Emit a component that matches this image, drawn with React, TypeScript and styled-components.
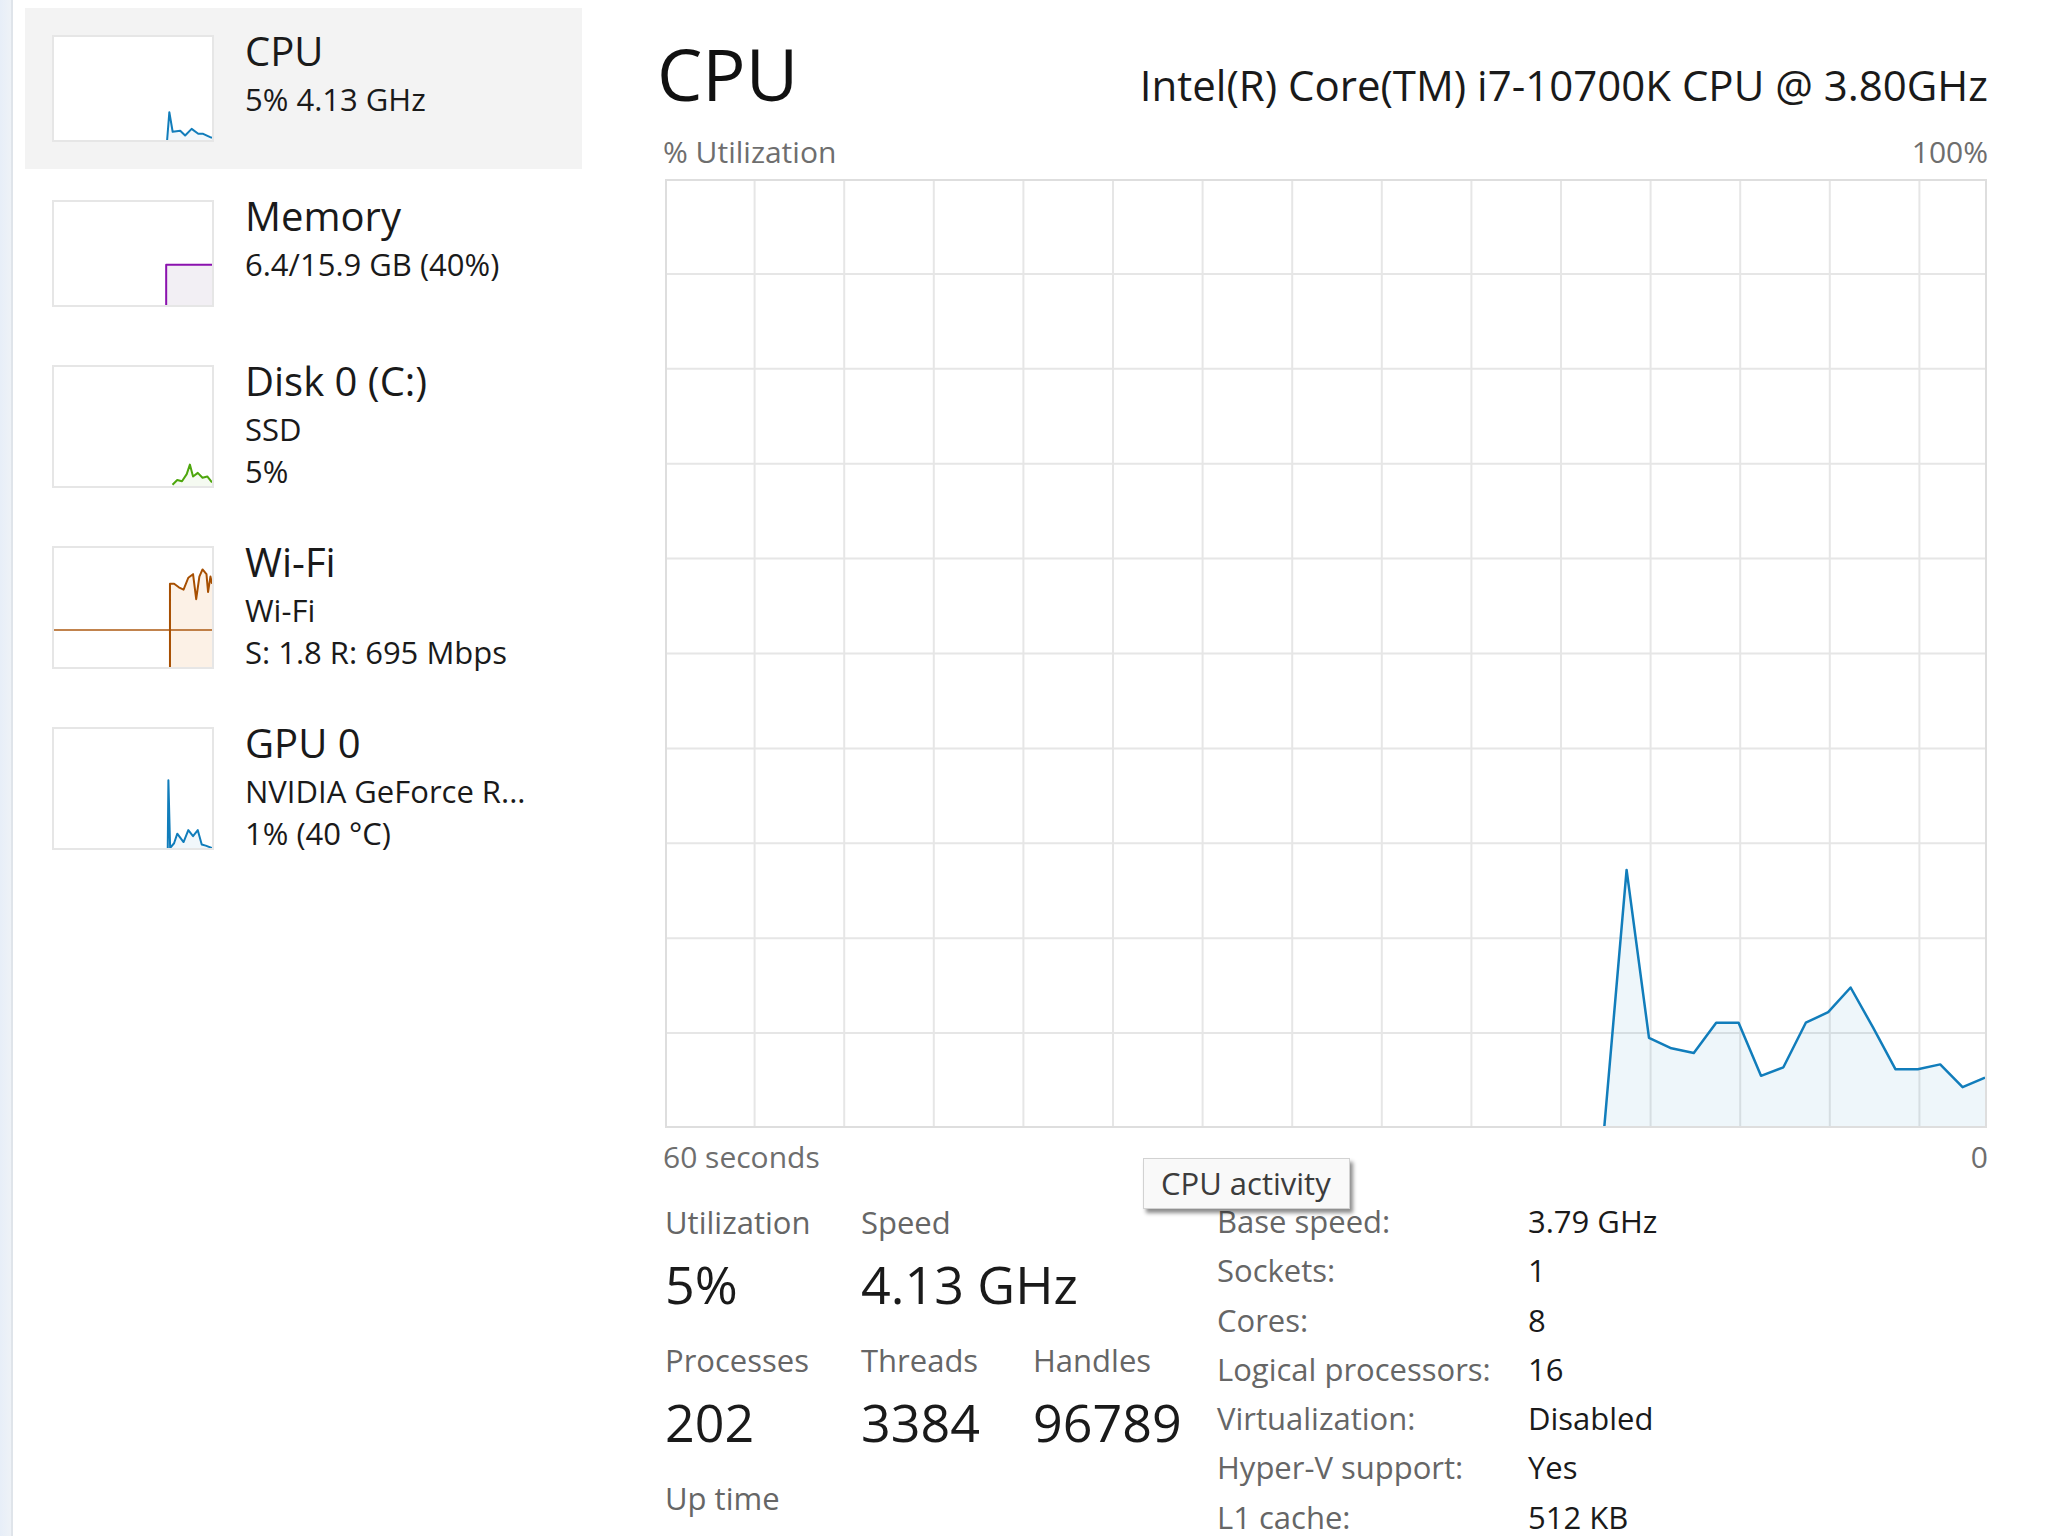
import styled, { createGlobalStyle } from 'styled-components';

type Point = [number, number];

interface Device {
  title: string;
  lines: string[];
  color: string;
  fill: string;
  points: Point[];
  guide?: number;
  selected?: boolean;
}

const GlobalStyle = createGlobalStyle`
  html, body {
    margin: 0;
    padding: 0;
    background: #ffffff;
    overflow: hidden;
  }
  body {
    font-family: 'Segoe UI', 'Open Sans', sans-serif;
    color: #1a1a1a;
  }
  * {
    box-sizing: border-box;
  }
`;

const Window = styled.div`
  display: flex;
  width: 2048px;
  height: 1536px;
  overflow: hidden;
  background: #ffffff;
`;

const EdgeStrip = styled.div`
  flex: 0 0 13px;
  background: linear-gradient(to right, #e7eef8, #eef2f7);
  border-right: 2px solid #dfe4ea;
`;

const Sidebar = styled.nav`
  flex: 0 0 582px;
  display: flex;
  flex-direction: column;
  gap: 4px;
  padding: 8px 13px 0 12px;
`;

const NavItem = styled.div<{ $selected?: boolean }>`
  display: flex;
  align-items: flex-start;
  gap: 31px;
  padding: 27px;
  background: ${({ $selected }) => ($selected ? '#f3f3f3' : 'transparent')};
`;

const Thumb = styled.div<{ $tall?: boolean }>`
  flex: 0 0 162px;
  height: ${({ $tall }) => ($tall ? '123px' : '107px')};
  border: 2px solid #e6e6e6;
  background: #ffffff;

  svg {
    display: block;
    width: 100%;
    height: 100%;
  }
`;

const NavText = styled.div`
  display: flex;
  flex-direction: column;
  margin: -11px 0 -10px;
`;

const NavTitle = styled.div`
  font-size: 40px;
  line-height: 54px;
  color: #1a1a1a;
  white-space: nowrap;
`;

const NavLine = styled.div`
  font-size: 31px;
  line-height: 42px;
  color: #1a1a1a;
  white-space: nowrap;
`;

const Main = styled.main`
  flex: 1;
  min-width: 0;
  display: flex;
  flex-direction: column;
  padding: 31px 60px 0 68px;
`;

const Header = styled.header`
  display: flex;
  align-items: baseline;
  justify-content: space-between;
`;

const Title = styled.h1`
  margin: 0 0 0 -6px;
  font-size: 72px;
  font-weight: 400;
  line-height: 84px;
  color: #111111;
`;

const Model = styled.div`
  font-size: 42px;
  line-height: 47px;
  color: #1a1a1a;
`;

const AxisRow = styled.div<{ $top: number }>`
  display: flex;
  justify-content: space-between;
  margin-top: ${({ $top }) => $top}px;
  font-size: 30px;
  line-height: 35px;
  color: #6e6e6e;
`;

const ChartBox = styled.div`
  margin: 10px 1px 0 2px;
  height: 949px;

  svg {
    display: block;
    width: 100%;
    height: 100%;
  }
`;

const StatsArea = styled.section`
  position: relative;
  display: flex;
  margin-top: 30px;
  padding-left: 2px;
`;

const LiveGrid = styled.div`
  display: grid;
  grid-template-columns: 196px 172px 184px;
  row-gap: 27px;
  align-content: start;
`;

const Stat = styled.div<{ $span?: number }>`
  display: flex;
  flex-direction: column;
  gap: 13px;
  grid-column: span ${({ $span }) => $span ?? 1};
`;

const StatLabel = styled.div`
  font-size: 31px;
  line-height: 36px;
  color: #666666;
  white-space: nowrap;
`;

const StatValue = styled.div`
  font-size: 52px;
  line-height: 62px;
  color: #1a1a1a;
  white-space: nowrap;
`;

const Details = styled.dl`
  margin: -7px 0 0;
  display: grid;
  grid-template-columns: 311px auto;
  align-content: start;
  font-size: 31px;
  line-height: 49.3px;
`;

const DetailLabel = styled.dt`
  color: #666666;
  white-space: nowrap;
`;

const DetailValue = styled.dd`
  margin: 0;
  color: #1a1a1a;
  white-space: nowrap;
`;

const Tooltip = styled.div`
  position: absolute;
  left: 480px;
  top: -46px;
  height: 51px;
  padding: 0 18px 0 17px;
  font-size: 31px;
  line-height: 48px;
  color: #3c3c3c;
  background: #f9f9f9;
  border: 1px solid #d2d2d2;
  box-shadow: 3px 4px 4px rgba(0, 0, 0, 0.45);
  white-space: nowrap;
`;

const devices: Device[] = [
  {
    title: 'CPU',
    lines: ['5% 4.13 GHz'],
    color: '#117dbb',
    fill: 'rgba(17, 125, 187, 0.06)',
    selected: true,
    points: [
      [71.6, 100], [73, 73], [75.1, 92], [79.9, 91], [83, 95.6], [87.1, 89.2],
      [91.3, 94], [94.4, 94], [98.5, 97], [100, 98],
    ],
  },
  {
    title: 'Memory',
    lines: ['6.4/15.9 GB (40%)'],
    color: '#8b12ae',
    fill: '#f2eff4',
    points: [[71, 100], [71, 61], [100, 61]],
  },
  {
    title: 'Disk 0 (C:)',
    lines: ['SSD', '5%'],
    color: '#4da60c',
    fill: 'rgba(77, 166, 12, 0.06)',
    points: [
      [75, 99], [78, 95], [81, 96], [84, 90], [86, 82], [88, 92], [91, 89],
      [94, 93], [97, 92], [100, 97],
    ],
  },
  {
    title: 'Wi-Fi',
    lines: ['Wi-Fi', 'S: 1.8 R: 695 Mbps'],
    color: '#a74f01',
    fill: '#fcf1e6',
    guide: 69,
    points: [
      [73.4, 100], [73.4, 30], [76, 30], [79, 33], [82, 35], [85, 25], [88, 22],
      [90, 43], [92, 24], [94, 18], [96.5, 22], [97.5, 37], [99, 24], [100, 30],
    ],
  },
  {
    title: 'GPU 0',
    lines: ['NVIDIA GeForce R...', '1% (40 °C)'],
    color: '#117dbb',
    fill: 'rgba(17, 125, 187, 0.06)',
    points: [
      [72, 100], [72.4, 43], [73.5, 100], [76, 96], [78, 88], [82, 95], [85, 85],
      [88, 90], [91, 85], [93.5, 97], [96, 98], [100, 100],
    ],
  },
];

const liveStats: { label: string; value?: string; span?: number }[] = [
  { label: 'Utilization', value: '5%' },
  { label: 'Speed', value: '4.13 GHz', span: 2 },
  { label: 'Processes', value: '202' },
  { label: 'Threads', value: '3384' },
  { label: 'Handles', value: '96789' },
  { label: 'Up time', span: 3 },
];

const details = [
  ['Base speed:', '3.79 GHz'],
  ['Sockets:', '1'],
  ['Cores:', '8'],
  ['Logical processors:', '16'],
  ['Virtualization:', 'Disabled'],
  ['Hyper-V support:', 'Yes'],
  ['L1 cache:', '512 KB'],
];

// last samples of the 60 second window, in percent
const cpuHistory = [
  0, 27.2, 9.5, 8.4, 7.9, 11.1, 11.1, 5.5, 6.4, 11.1, 12.2, 14.8, 10.6, 6.2, 6.2, 6.7, 4.3, 5.3,
];

const CHART_W = 1322;
const CHART_H = 949;
const GRID_X = 89.6;
const SAMPLE_STEP = 22.4;

const Sparkline = ({ color, fill, points, guide }: Device) => {
  const line = points.map(([x, y]) => `${x},${y}`).join(' ');
  const area = `${points[0][0]},100 ${line} 100,100`;
  return (
    <svg viewBox="0 0 100 100" preserveAspectRatio="none">
      <polygon points={area} fill={fill} />
      {guide !== undefined && (
        <line
          x1={0}
          y1={guide}
          x2={100}
          y2={guide}
          stroke={color}
          strokeOpacity={0.7}
          strokeWidth={2}
          vectorEffect="non-scaling-stroke"
        />
      )}
      <polyline
        points={line}
        fill="none"
        stroke={color}
        strokeWidth={2}
        strokeLinejoin="round"
        vectorEffect="non-scaling-stroke"
      />
    </svg>
  );
};

const UtilizationChart = () => {
  const last = cpuHistory.length - 1;
  const pts = cpuHistory.map((v, i) => {
    const x = CHART_W - 2 - (last - i) * SAMPLE_STEP;
    const y = CHART_H - (v / 100) * CHART_H;
    return `${x.toFixed(1)},${y.toFixed(1)}`;
  });
  const firstX = CHART_W - 2 - last * SAMPLE_STEP;
  const rows = Array.from({ length: 9 }, (_, i) => ((i + 1) * CHART_H) / 10);
  const cols = Array.from({ length: Math.floor(CHART_W / GRID_X) }, (_, i) => (i + 1) * GRID_X);

  return (
    <svg viewBox={`0 0 ${CHART_W} ${CHART_H}`} preserveAspectRatio="none">
      {rows.map((y) => (
        <line key={`r${y}`} x1={0} y1={y} x2={CHART_W} y2={y} stroke="#e6e6e6" strokeWidth={2} />
      ))}
      {cols.map((x) => (
        <line key={`c${x}`} x1={x} y1={0} x2={x} y2={CHART_H} stroke="#e6e6e6" strokeWidth={2} />
      ))}
      <polygon
        points={`${firstX},${CHART_H} ${pts.join(' ')} ${CHART_W - 2},${CHART_H}`}
        fill="rgba(17, 125, 187, 0.07)"
      />
      <polyline
        points={pts.join(' ')}
        fill="none"
        stroke="#117dbb"
        strokeWidth={2.5}
        strokeLinejoin="round"
      />
      <rect x={1} y={1} width={CHART_W - 2} height={CHART_H - 2} fill="none" stroke="#dedede" strokeWidth={2} />
    </svg>
  );
};

const App = () => (
  <>
    <GlobalStyle />
    <Window>
      <EdgeStrip />
      <Sidebar>
        {devices.map((d) => (
          <NavItem key={d.title} $selected={d.selected}>
            <Thumb $tall={d.lines.length > 1}>
              <Sparkline {...d} />
            </Thumb>
            <NavText>
              <NavTitle>{d.title}</NavTitle>
              {d.lines.map((l) => (
                <NavLine key={l}>{l}</NavLine>
              ))}
            </NavText>
          </NavItem>
        ))}
      </Sidebar>
      <Main>
        <Header>
          <Title>CPU</Title>
          <Model>Intel(R) Core(TM) i7-10700K CPU @ 3.80GHz</Model>
        </Header>
        <AxisRow $top={19}>
          <span>% Utilization</span>
          <span>100%</span>
        </AxisRow>
        <ChartBox>
          <UtilizationChart />
        </ChartBox>
        <AxisRow $top={11}>
          <span>60 seconds</span>
          <span>0</span>
        </AxisRow>
        <StatsArea>
          <LiveGrid>
            {liveStats.map((s) => (
              <Stat key={s.label} $span={s.span}>
                <StatLabel>{s.label}</StatLabel>
                {s.value && <StatValue>{s.value}</StatValue>}
              </Stat>
            ))}
          </LiveGrid>
          <Details>
            {details.map(([k, v]) => (
              <div key={k} style={{ display: 'contents' }}>
                <DetailLabel>{k}</DetailLabel>
                <DetailValue>{v}</DetailValue>
              </div>
            ))}
          </Details>
          <Tooltip>CPU activity</Tooltip>
        </StatsArea>
      </Main>
    </Window>
  </>
);

export default App;
